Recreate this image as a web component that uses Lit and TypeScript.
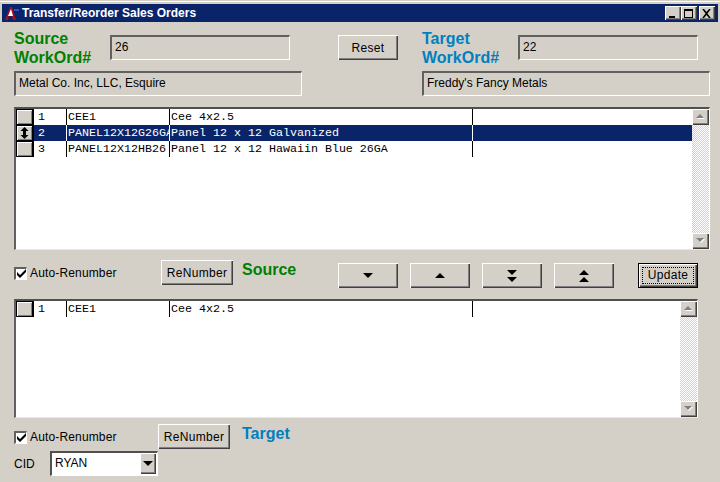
import { LitElement, html, css, svg } from "lit";
import { customElement } from "lit/decorators.js";

const tri = (x: number, y: number, w: number, down: boolean, fill = "#000") => {
  const h = Math.ceil(w / 2);
  const pts = down
    ? `${x},${y} ${x + w},${y} ${x + w / 2},${y + h}`
    : `${x},${y + h} ${x + w},${y + h} ${x + w / 2},${y}`;
  return svg`<polygon points=${pts} fill=${fill}></polygon>`;
};

const icon = (w: number, h: number, body: unknown) =>
  html`<svg width=${w} height=${h} viewBox="0 0 ${w} ${h}">${body}</svg>`;

const check = html`<span class="box"><svg width="9" height="9" viewBox="0 0 9 9"><path d="M0 3 L3 6 L9 0 V3 L3 9 L0 6 Z" fill="#000"></path></svg></span>`;

@customElement("app-root")
export class AppRoot extends LitElement {
  static styles = css`
    :host {
      display: block;
      width: 720px;
      height: 482px;
      overflow: hidden;
      background: #d4d0c8;
      font: 12px "Liberation Sans", Arial, sans-serif;
      color: #000;
    }
    .topline { height: 1px; margin-top: 1px; background: #fff; margin-bottom: 2px; }
    .title {
      height: 18px; margin: 0 2px; background: #0a246a; color: #fff;
      display: flex; align-items: center; padding: 0 3px 0 3px;
      font: bold 12px "Liberation Sans", Arial, sans-serif;
      box-sizing: border-box;
    }
    .title svg.logo { margin-right: 3px; flex: none; }
    .title .name { flex: 1; white-space: nowrap; }
    .wb {
      width: 16px; height: 14px; background: #d4d0c8; display: flex;
      align-items: center; justify-content: center; flex: none;
      box-shadow: inset 1px 1px 0 #fff, inset -1px -1px 0 #404040, inset -2px -2px 0 #808080;
    }
    .wb.x { margin-left: 2px; }

    .row { display: flex; align-items: flex-start; }
    .r1 { height: 49px; padding-top: 7px; box-sizing: border-box; }
    .r2 { height: 25px; padding-left: 14px; }
    .lab {
      font: bold 16px/19px "Liberation Sans", Arial, sans-serif;
      white-space: nowrap;
    }
    .src { color: #008000; }
    .tgt { color: #0080c0; }

    .field {
      box-sizing: border-box; height: 25px; background: #d4d0c8;
      border-style: solid; border-width: 2px 1px 1px 2px;
      border-color: #606060 #fff #fff #606060;
      padding: 3px 3px 0 3px; line-height: 15px; white-space: nowrap;
    }

    button {
      box-sizing: border-box; border: none; margin: 0; padding: 0;
      background: #d4d0c8; height: 25px; width: 60px; color: #000;
      font: 12px "Liberation Sans", Arial, sans-serif;
      letter-spacing: 0.3px;
      display: flex; align-items: center; justify-content: center;
      box-shadow: inset 1px 1px 0 #fff, inset -1px -1px 0 #404040, inset -2px -2px 0 #808080;
    }
    button.renum { width: 72px; }
    button.update {
      border: 1px solid #000;
      box-shadow: inset 1px 1px 0 #fff, inset -1px -1px 0 #404040, inset -2px -2px 0 #808080;
    }
    button.update span {
      box-sizing: border-box; display: block; width: 52px; height: 17px; line-height: 15px;
      border: 1px dotted #000; text-align: center;
    }

    .grid {
      box-sizing: border-box; background: #fff; display: flex;
      margin-left: 14px;
      border-style: solid; border-width: 2px 1px 1px 2px;
      border-color: #505050 #fff #e8e8e8 #606060;
    }
    .g1 { width: 696px; height: 143px; margin-top: 11px; }
    .g2 { width: 684px; height: 119px; }
    .rows { flex: 1; min-width: 0; }
    .tr { display: flex; height: 16px; font: 11.67px/17px "Liberation Mono", "Courier New", monospace; }
    .tr.sel { background: #0a246a; color: #fff; }
    .sel-cell { width: 18px; flex: none; box-sizing: border-box; border: 1px solid #000; border-right-width: 2px; background: #d4d0c8; box-shadow: inset 1px 1px 0 #fff, inset -1px -1px 0 #808080; display: flex; align-items: center; justify-content: center; }
    .c { box-sizing: border-box; border-right: 1px solid #000; overflow: hidden; white-space: nowrap; flex: none; }
    .sel .c { border-right-color: #fff; }
    .c0 { width: 33px; padding-left: 4px; }
    .c1 { width: 103px; padding-left: 1px; }
    .c2 { width: 303px; padding-left: 1px; }

    .sb { width: 17px; flex: none; display: flex; flex-direction: column; background: repeating-conic-gradient(#fff 0 25%, #d4d0c8 0 50%) 0 0 / 2px 2px; }
    .sb i {
      height: 16px; background: #d4d0c8; display: flex; align-items: center; justify-content: center; flex: none;
      box-shadow: inset 1px 1px 0 #fff, inset -1px -1px 0 #404040, inset -2px -2px 0 #808080;
    }
    .sb .sp { flex: 1; }

    .tb { height: 49px; padding: 10px 0 0 14px; box-sizing: border-box; }
    .chk { display: flex; align-items: center; white-space: nowrap; letter-spacing: 0.15px; }
    .box {
      box-sizing: border-box; width: 13px; height: 13px; background: #fff; flex: none; margin-right: 3px;
      border-style: solid; border-width: 2px 1px 1px 2px; border-color: #606060 #fff #fff #606060;
      display: flex; align-items: center; justify-content: center;
    }
    .tb .chk { margin-top: 6px; width: 147px; }
    .tb .lab { margin: 0 0 0 9px; }
    .arrows { display: flex; gap: 12px; }
    .tb .s1 { margin-top: 3px; }

    .b1 { height: 33px; padding: 6px 0 0 14px; box-sizing: border-box; }
    .b1 .chk { margin-top: 6px; width: 144px; }
    .b1 .lab { margin: 0 0 0 12px; }
    .b2 { padding-left: 14px; align-items: center; height: 25px; }
    .cid { width: 36px; }
    .select {
      box-sizing: border-box; width: 108px; height: 25px; background: #fff;
      border-style: solid; border-width: 2px 1px 1px 2px; border-color: #505050 #fff #fff #505050;
      display: flex; align-items: stretch; padding: 0 1px 1px 0;
    }
    .select .v { flex: 1; padding: 3px 0 0 3px; line-height: 15px; }
    .select i {
      width: 16px; flex: none; background: #d4d0c8; display: flex; align-items: center; justify-content: center;
      box-shadow: inset 1px 1px 0 #fff, inset -1px -1px 0 #404040, inset -2px -2px 0 #808080;
    }
  `;

  private row(n: string, code: string, desc: string, sel = false) {
    return html`<div class="tr ${sel ? "sel" : ""}">
      <div class="sel-cell">${sel
        ? icon(9, 12, svg`<path d="M4.5 0 L8.5 4 H6 V8 H8.5 L4.5 12 L0.5 8 H3 V4 H0.5 Z" fill="#000"></path>`)
        : ""}</div>
      <div class="c c0">${n}</div>
      <div class="c c1">${code}</div>
      <div class="c c2">${desc}</div>
    </div>`;
  }

  private scrollbar() {
    return html`<div class="sb">
      <i>${icon(10, 6, svg`${tri(1, 1, 8, false, "#fff")}${tri(0, 0, 8, false, "#808080")}`)}</i>
      <div class="sp"></div>
      <i>${icon(10, 6, svg`${tri(1, 1, 8, true, "#fff")}${tri(0, 0, 8, true, "#808080")}`)}</i>
    </div>`;
  }

  render() {
    return html`
      <div class="topline"></div>
      <div class="title">
        <svg class="logo" width="14" height="15" viewBox="0 0 14 15">
          <path d="M0 14 L5 1 L7 1 L11 14 L8 14 L7 10 L4 10 L3 14 Z" fill="#a01020"></path>
          <path d="M3 10 L6 3 L8 10 Z" fill="#fff"></path>
          <path d="M9 3 H14 V5 H9 Z" fill="#3050d0"></path>
        </svg>
        <span class="name">Transfer/Reorder Sales Orders</span>
        <span class="wb">${icon(10, 9, svg`<rect x="1" y="7" width="6" height="2" fill="#000"></rect>`)}</span>
        <span class="wb">${icon(10, 9, svg`<path d="M0 0 H9 V9 H0 Z M1 2 V8 H8 V2 Z" fill="#000" fill-rule="evenodd"></path>`)}</span>
        <span class="wb x">${icon(10, 9, svg`<path d="M0.5 0 H2 L4.5 3 L7 0 H8.5 V0.5 L5.5 4.5 L8.5 8.5 V9 H7 L4.5 6 L2 9 H0.5 V8.5 L3.5 4.5 L0.5 0.5 Z" fill="#000"></path>`)}</span>
      </div>

      <div class="row r1">
        <div class="lab src" style="width:96px;margin-left:14px">Source<br />WorkOrd#</div>
        <div class="field" style="width:180px;margin-top:6px">26</div>
        <button style="margin:6px 24px 0 48px">Reset</button>
        <div class="lab tgt" style="width:96px">Target<br />WorkOrd#</div>
        <div class="field" style="width:180px;margin-top:6px">22</div>
      </div>
      <div class="row r2">
        <div class="field" style="width:288px">Metal Co. Inc, LLC, Esquire</div>
        <div class="field" style="width:288px;margin-left:120px">Freddy's Fancy Metals</div>
      </div>

      <div class="grid g1">
        <div class="rows">
          ${this.row("1", "CEE1", "Cee 4x2.5")}
          ${this.row("2", "PANEL12X12G26GA", "Panel 12 x 12 Galvanized", true)}
          ${this.row("3", "PANEL12X12HB26", "Panel 12 x 12 Hawaiin Blue 26GA")}
        </div>
        ${this.scrollbar()}
      </div>

      <div class="row tb">
        <label class="chk">${check}Auto-Renumber</label>
        <button class="renum">ReNumber</button>
        <div class="lab src" style="width:96px">Source</div>
        <div class="arrows s1">
          <button>${icon(10, 5, tri(0, 0, 10, true))}</button>
          <button>${icon(10, 5, tri(0, 0, 10, false))}</button>
          <button>${icon(10, 12, svg`${tri(0, 0, 10, true)}${tri(0, 7, 10, true)}`)}</button>
          <button>${icon(10, 12, svg`${tri(0, 0, 10, false)}${tri(0, 7, 10, false)}`)}</button>
        </div>
        <button class="update s1" style="margin-left:24px"><span>Update</span></button>
      </div>

      <div class="grid g2">
        <div class="rows">${this.row("1", "CEE1", "Cee 4x2.5")}</div>
        ${this.scrollbar()}
      </div>

      <div class="row b1">
        <label class="chk">${check}Auto-Renumber</label>
        <button class="renum">ReNumber</button>
        <div class="lab tgt">Target</div>
      </div>
      <div class="row b2">
        <span class="cid">CID</span>
        <div class="select">
          <span class="v">RYAN</span>
          <i>${icon(10, 5, tri(0, 0, 10, true))}</i>
        </div>
      </div>
    `;
  }
}
